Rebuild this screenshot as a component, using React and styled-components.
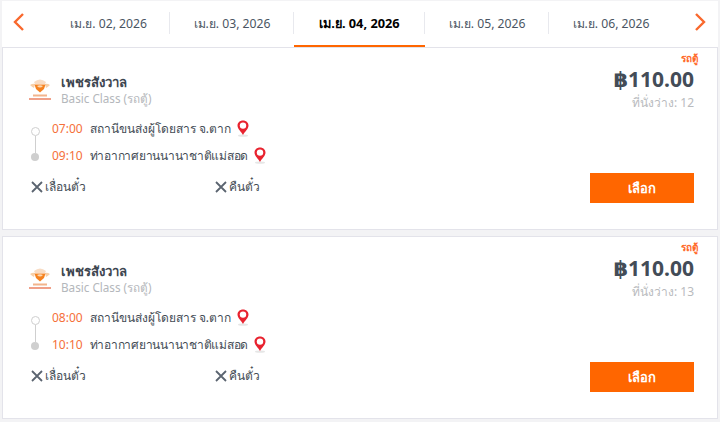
import React from "react";
import styled, { createGlobalStyle } from "styled-components";

const Global = createGlobalStyle`
  html, body { margin: 0; padding: 0; background: #f3f3f5; }
  body { font-family: "Noto Sans", "Open Sans", "DejaVu Sans", sans-serif; }
`;
const Page = styled.div`
  width: 720px; height: 422px; padding: 1px 2px 0; box-sizing: border-box; overflow: hidden;
  display: flex; flex-direction: column;
`;
const Header = styled.div`
  height: 46px; display: flex; align-items: stretch; background: #fff; flex: none;
`;
const Arrow = styled.div`
  width: 45px; flex: none; display: flex; align-items: center; justify-content: ${p => p.$right ? "flex-end" : "flex-start"};
  padding: 0 ${p => p.$right ? "12px" : "0"} 4px ${p => p.$right ? "0" : "11px"}; box-sizing: border-box;
`;
const Tabs = styled.div`display: flex; flex: 1; align-items: stretch;`;
const Tab = styled.div`
  flex: none; width: ${p => p.$w}px; box-sizing: border-box; position: relative; display: flex; align-items: center; justify-content: center;
  padding-top: 1px; font-size: ${p => p.$active ? "12.8px" : "12.2px"}; white-space: nowrap;
  color: ${p => p.$active ? "#000" : "#4a5562"}; font-weight: ${p => p.$active ? 700 : 400};
  border-bottom: 2px solid ${p => p.$active ? "#ff6600" : "transparent"};
  &::after { content: ""; display: ${p => p.$last ? "none" : "block"}; position: absolute; right: 0; top: 11px; height: 22px; width: 1px; background: #e8e9ee; }
`;
const Card = styled.div`
  flex: none; height: 183px; box-sizing: border-box; background: #fff; border: 1px solid #e3e3ea; margin-bottom: 6px;
  display: flex; justify-content: space-between; padding: 0 23px 0 25px; position: relative;
`;
const Left = styled.div`display: flex; flex-direction: column; padding-top: 26px;`;
const Brand = styled.div`display: flex; align-items: center; gap: 9px;`;
const BrandText = styled.div`display: flex; flex-direction: column;`;
const Name = styled.div`font-size: 13.2px; line-height: 16px; font-weight: 700; color: #3d4650;`;
const Sub = styled.div`font-size: 11.7px; line-height: 16px; color: #b4b7bb;`;
const Route = styled.div`display: flex; margin-top: 13px; position: relative;`;
const Timeline = styled.div`
  width: 8px; margin: 8px 13px 0 3px; height: 34px; flex: none; display: flex; flex-direction: column; align-items: center;
`;
const Hollow = styled.div`width: 7px; height: 7px; border-radius: 50%; border: 1px solid #cfcfcf; background: #fff; flex: none;`;
const Line = styled.div`width: 1px; flex: 1; background: #cfcfcf;`;
const Solid = styled.div`width: 8px; height: 8px; border-radius: 50%; background: #cfcfcf; flex: none;`;
const Stops = styled.div`display: flex; flex-direction: column; gap: 8px;`;
const Stop = styled.div`display: flex; align-items: center; height: 19px; font-size: 12px; color: #444c55; white-space: nowrap;`;
const StopName = styled.span`letter-spacing: ${p => p.$tight ? "-0.25px" : "0"};`;
const Time = styled.span`color: #f5703a; margin-right: 7px; font-size: 12px;`;
const Pin = styled.svg`margin-left: 6px; margin-top: -1px; flex: none;`;
const Policies = styled.div`display: flex; margin-top: 12px; margin-left: 3px;`;
const Policy = styled.div`
  width: 184px; display: flex; align-items: center; gap: 2px; font-size: 12px; color: #444c55;
`;
const Right = styled.div`display: flex; flex-direction: column; align-items: flex-end; padding-top: 4px;`;
const Tag = styled.div`font-size: 10px; line-height: 12px; font-weight: 700; color: #ff6a2b; margin-right: -4px;`;
const Price = styled.div`font-size: 21px; line-height: 26px; font-weight: 700; color: #434c57; margin-top: 2px;`;
const Seats = styled.div`font-size: 12px; line-height: 16px; color: #b9bbbe; margin-top: 3px;`;
const Choose = styled.button`
  width: 104px; height: 30px; margin-top: 62px; border: 0; background: #ff6600; color: #fff;
  font-family: inherit; font-size: 13px; font-weight: 700; padding: 0;
`;

const Chev = ({ right }) => (
  <svg width="12" height="18" viewBox="0 0 12 18" fill="none">
    <path d={right ? "M2 1 L10 9 L2 17" : "M10 1 L2 9 L10 17"} stroke="#f9682d" strokeWidth="2.4" />
  </svg>
);
const Logo = () => (
  <svg width="24" height="26" viewBox="0 0 24 26">
    <path d="M6 5 Q12 0 18 5 L17 7 H7Z" fill="#f8dcc4" />
    <path d="M2 8 Q5 6 7 7 L6 11 Q4 10 2 8Z M22 8 Q19 6 17 7 L18 11 Q20 10 22 8Z" fill="#f7cfa8" />
    <path d="M6.5 7.5 H17.5 L16 12 L12 15.5 L8 12Z" fill="#f58220" />
    <path d="M9 9 Q12 7.5 15 9 Q12 12 9 9Z" fill="#fbd9b5" />
    <rect x="5" y="17.5" width="14" height="2" fill="#f2b48c" />
    <rect x="1" y="21" width="22" height="2" fill="#f0a088" />
  </svg>
);
const MapPin = () => (
  <Pin width="12" height="17" viewBox="0 0 12 17">
    <ellipse cx="6" cy="15.7" rx="5" ry="1.1" fill="#e6e6e6" />
    <path d="M6 .5 C2.8 .5 .5 2.8 .5 5.6 C.5 9 4.2 11.8 6 15 C7.8 11.8 11.5 9 11.5 5.6 C11.5 2.8 9.2 .5 6 .5Z" fill="#e8232f" />
    <circle cx="6" cy="5.6" r="3.2" fill="#fff" />
  </Pin>
);
const Cross = () => (
  <svg width="12" height="12" viewBox="0 0 12 12">
    <path d="M1 1 L11 11 M11 1 L1 11" stroke="#5b6470" strokeWidth="1.8" />
  </svg>
);

const tabs = [["เม.ย. 02, 2026", 123], ["เม.ย. 03, 2026", 124], ["เม.ย. 04, 2026", 131, true], ["เม.ย. 05, 2026", 124], ["เม.ย. 06, 2026", 124]];
const trips = [
  { dep: "07:00", arr: "09:10", seats: 12 },
  { dep: "08:00", arr: "10:10", seats: 13 },
];

export default function App() {
  return (
    <Page>
      <Global />
      <Header>
        <Arrow><Chev /></Arrow>
        <Tabs>
          {tabs.map(([t, w, a], i) => <Tab key={t} $w={w} $active={a} $last={i === 4}>{t}</Tab>)}
        </Tabs>
        <Arrow $right><Chev right /></Arrow>
      </Header>
      {trips.map(t => (
        <Card key={t.dep}>
          <Left>
            <Brand>
              <Logo />
              <BrandText>
                <Name>เพชรสังวาล</Name>
                <Sub>Basic Class (รถตู้)</Sub>
              </BrandText>
            </Brand>
            <Route>
              <Timeline><Hollow /><Line /><Solid /></Timeline>
              <Stops>
                <Stop><Time>{t.dep}</Time><StopName>สถานีขนส่งผู้โดยสาร จ.ตาก</StopName><MapPin /></Stop>
                <Stop><Time>{t.arr}</Time><StopName $tight>ท่าอากาศยานนานาชาติแม่สอด</StopName><MapPin /></Stop>
              </Stops>
            </Route>
            <Policies>
              <Policy><Cross />เลื่อนตั๋ว</Policy>
              <Policy><Cross />คืนตั๋ว</Policy>
            </Policies>
          </Left>
          <Right>
            <Tag>รถตู้</Tag>
            <Price>฿110.00</Price>
            <Seats>ที่นั่งว่าง: {t.seats}</Seats>
            <Choose>เลือก</Choose>
          </Right>
        </Card>
      ))}
    </Page>
  );
}
